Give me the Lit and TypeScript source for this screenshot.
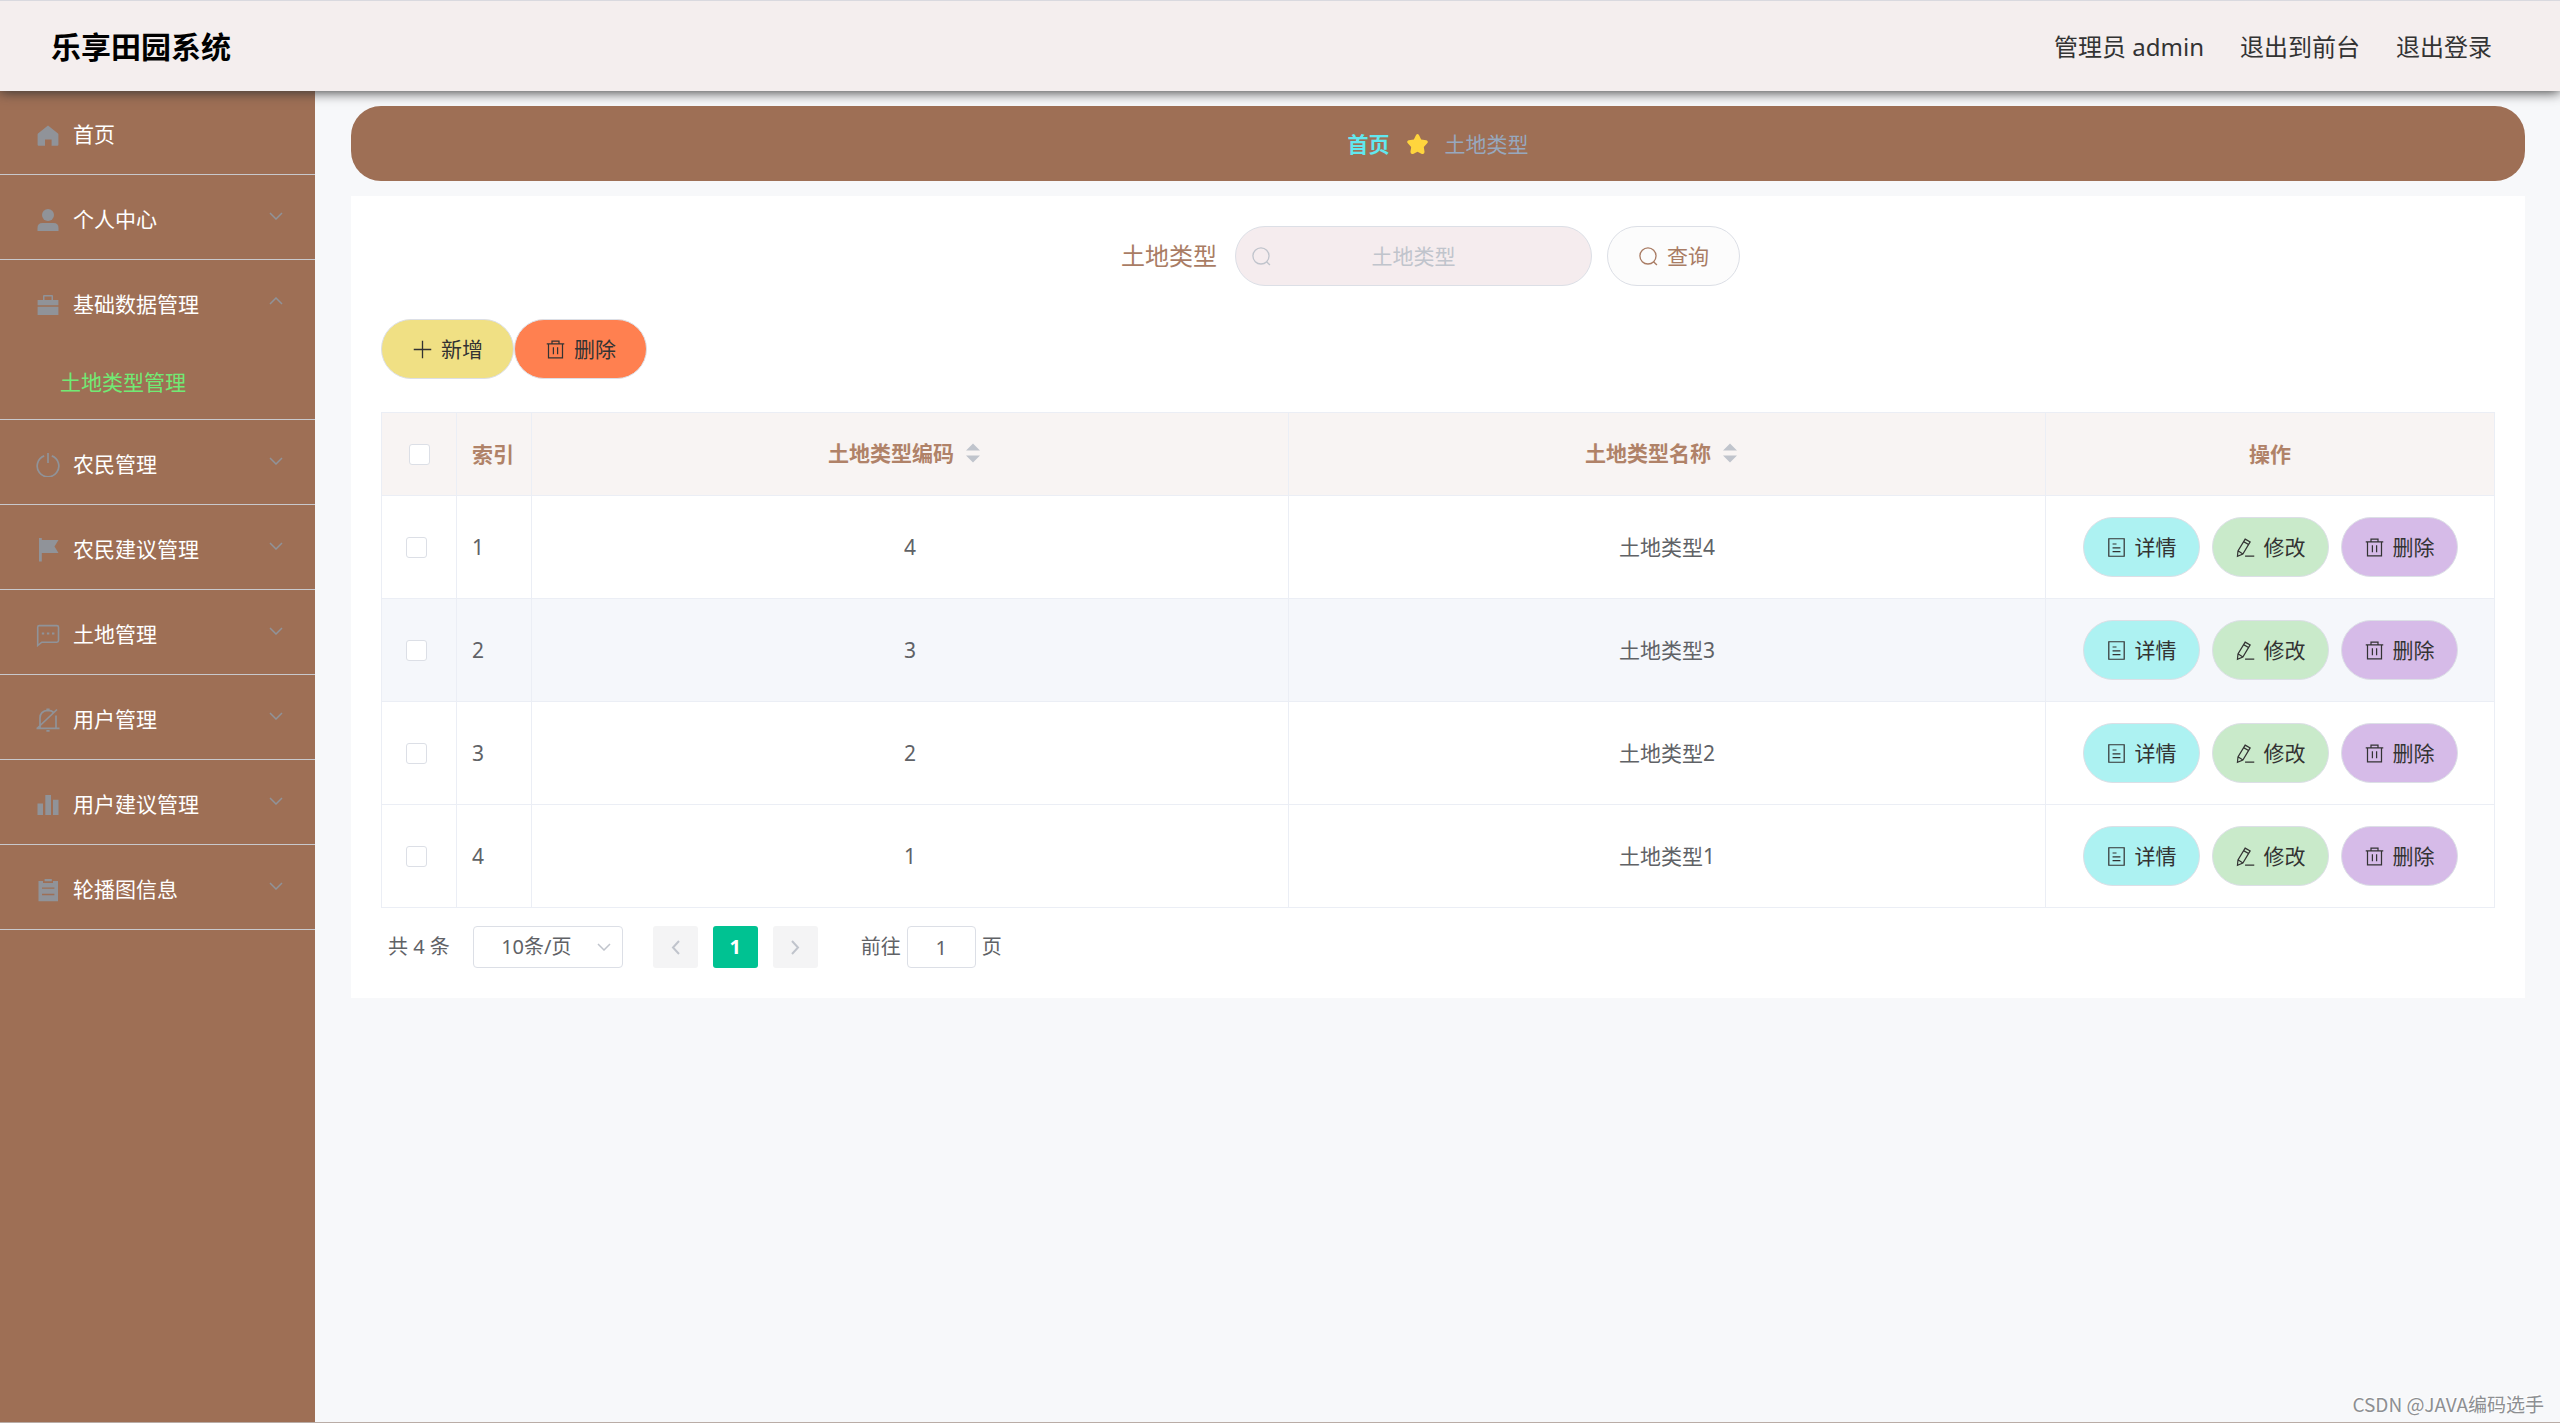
import { LitElement, html, css, svg, nothing } from "lit";
import { customElement, state } from "lit/decorators.js";
import { classMap } from "lit/directives/class-map.js";

const solid = {
  home: svg`<path d="M12 2.5 22 10.5Q22.4 10.8 22.4 11.5V21.8Q22.4 22.8 21.4 22.8H15.6V16.6H9V22.8H2.7Q1.6 22.8 1.6 21.8V11.5Q1.6 10.8 2 10.5Z"/>`,
  user: svg`<circle cx="12" cy="7" r="6"/><path d="M1.5 23V20Q1.5 15 6.5 15H17.5Q22.5 15 22.5 20V23Z"/>`,
  briefcase: svg`<path d="M7 7V3Q7 2 8 2H16Q17 2 17 3V7H22.4V12.2H1.6V7ZM8.5 7H15.5V3.4H8.5ZM1.6 13.8H22.4V22H1.6Z" fill-rule="evenodd"/>`,
  flag: svg`<path d="M3 0H5.8V2H22.5L18.5 8.5 22.5 15H5.8V23.5H3Z"/>`,
  bars: svg`<path d="M1.5 10.5H7V22H1.5ZM9.3 2H15V22H9.3ZM17 6.8H22.5V22H17Z"/>`,
  clipboard: svg`<path d="M2.5 3H7V5H17V3H22V23.2H2.5ZM8.6 1H15.8V3.2H8.6ZM6 9.4V10.8H18.4V9.4ZM6 15.8V17.2H18.4V15.8Z" fill-rule="evenodd"/>`,
};
const line = {
  power: svg`<path d="M8.2 2.9A10.8 10.8 0 1 0 15.8 2.9M12 0V10" stroke-width="1.7"/>`,
  chat: svg`<path d="M1.7 22.5V4.2Q1.7 2.6 3.3 2.6H20.9Q22.5 2.6 22.5 4.2V17.6Q22.5 19.2 20.9 19.2H5.8Z" stroke-width="1.6"/><path d="M5.8 10.6H8.2M10.9 10.6H13.3M16 10.6H18.4" stroke-width="2"/>`,
  bell: svg`<path d="M.5 20.4H23.5M4 19.5V10Q4 2.8 12 2.3 15.5 2.3 17.6 4.4M20 7.6V20.2M21 1.5 1 20.5" stroke-width="1.7"/><path d="M10.4 1.4H13.6M10.4 22.8H13.6" stroke-width="1.8"/>`,
  plus: svg`<path d="M12 2V22M2 12H22" stroke-width="1.5"/>`,
  trash: svg`<path d="M2 5.5H22M8 5V2.4H16V5M4 5.5V21.6H20V5.5M9.6 9.5V17.5M14.4 9.5V17.5" stroke-width="1.4"/>`,
  doc: svg`<path d="M3.2 2H20.8V22H3.2ZM7.5 8H12M7.5 12.4H16.5M7.5 16.8H16.5" stroke-width="1.4"/>`,
  pen: svg`<path d="M11.6 2.4 17.3 5.6 9 19.4 2.8 22 3.4 15.8ZM9.8 5.3 15.5 8.6M3.4 15.8 9 19.4M11.5 21.8H22" stroke-width="1.4"/>`,
  search: svg`<circle cx="11.4" cy="11.4" r="9.2" stroke-width="1.5"/><path d="M17.8 18 21.6 21.8" stroke-width="1.5"/>`,
};
type Solid = keyof typeof solid;
type Line = keyof typeof line;

const icon = (name: Solid | Line) =>
  name in solid
    ? html`<svg class="icon" viewBox="0 0 24 24" fill="currentColor" aria-hidden="true">${solid[name as Solid]}</svg>`
    : html`<svg class="icon" viewBox="0 0 24 24" fill="none" stroke="currentColor" aria-hidden="true">${line[name as Line]}</svg>`;

const chevron = (cls: string, d = "M1 1 7 7 13 1") =>
  html`<svg class=${cls} viewBox="0 0 14 8" fill="none" stroke="currentColor" stroke-width="1.5" aria-hidden="true"><path d=${d} /></svg>`;

interface MenuItem {
  label: string;
  icon: Solid | Line;
  leaf?: boolean;
  children?: string[];
}

const menu: MenuItem[] = [
  { label: "首页", icon: "home", leaf: true },
  { label: "个人中心", icon: "user" },
  { label: "基础数据管理", icon: "briefcase", children: ["土地类型管理"] },
  { label: "农民管理", icon: "power" },
  { label: "农民建议管理", icon: "flag" },
  { label: "土地管理", icon: "chat" },
  { label: "用户管理", icon: "bell" },
  { label: "用户建议管理", icon: "bars" },
  { label: "轮播图信息", icon: "clipboard" },
];

const rows = [4, 3, 2, 1].map((code, i) => ({ index: i + 1, code, name: `土地类型${code}` }));

@customElement("app-root")
export class AppRoot extends LitElement {
  @state() private opened = "基础数据管理";
  @state() private active = 2;

  static styles = css`
    :host {
      display: flex;
      flex-direction: column;
      box-sizing: border-box;
      min-height: 100vh;
      border-bottom: 1px solid #b9aca6;
      background: #f7f8fa;
      color: #606266;
      font-family: "Noto Sans", "Noto Sans CJK SC", sans-serif;
      font-size: 21px;
      line-height: 30px;
    }
    * { box-sizing: border-box; }
    a { color: inherit; text-decoration: none; }
    button, input, select { margin: 0; font: inherit; color: inherit; }
    button { cursor: pointer; }
    .icon { flex: none; width: 21px; height: 21px; }

    .top {
      position: relative;
      z-index: 1;
      display: flex;
      align-items: center;
      justify-content: space-between;
      height: 91px;
      margin-bottom: -1px;
      padding: 2px 68px 0 51px;
      border-top: 1px solid #d9d9df;
      background: #f4eeee;
      box-shadow: 0 1px 12px #333;
    }
    .title { margin: 0; color: #000; font-size: 30px; font-weight: 700; }
    .links { display: flex; gap: 36px; color: #333; font-size: 24px; }

    .body { position: relative; flex: 1; display: flex; }
    .side { flex: none; width: 315px; background: #9e6f55; }
    .group { border-bottom: 1px solid #c8c8cc; }
    .item {
      display: flex;
      align-items: center;
      gap: 13px;
      width: 100%;
      height: 84px;
      padding: 4px 32px 0 36px;
      border: 0;
      background: none;
      color: #fff;
      text-align: left;
    }
    .item .icon { width: 24px; height: 24px; margin-top: 2px; color: #909399; }
    .item .label { flex: 1; }
    .arrow { width: 14px; height: 8px; margin-bottom: 6px; color: #909399; }
    .arrow.open { transform: rotate(180deg); }
    .sub { display: flex; align-items: center; height: 75px; padding-left: 60px; color: #71ea74; }

    .main {
      flex: 1;
      min-width: 0;
      display: flex;
      flex-direction: column;
      gap: 15px;
      padding: 16px 35px 15px 36px;
    }
    .crumbs {
      display: flex;
      align-items: center;
      justify-content: center;
      gap: 16px;
      height: 75px;
      border-radius: 30px;
      background: #9e6f55;
      color: #97a8be;
    }
    .crumbs a { color: #61e8ef; font-weight: 700; }
    .star { width: 23px; height: 22px; fill: #ffd53d; }

    .card { display: flex; flex-direction: column; gap: 33px; padding: 30px; background: #fff; }
    .search { display: flex; align-items: center; justify-content: center; gap: 15px; padding-right: 15px; color: #a97c64; }
    .field { display: flex; align-items: center; gap: 18px; font-size: 24px; }
    .box {
      display: flex;
      align-items: center;
      width: 357px;
      height: 60px;
      padding: 0 15px;
      border: 1px solid #dcdfe6;
      border-radius: 30px;
      background: #f5ecee;
      color: #c0c4cc;
      font-size: 21px;
    }
    .box input {
      flex: 1;
      min-width: 0;
      padding: 0 21px 0 0;
      border: 0;
      outline: 0;
      background: none;
      color: #606266;
      text-align: center;
    }
    .box input::placeholder { color: #c0c4cc; opacity: 1; }

    .btn {
      display: flex;
      align-items: center;
      gap: 8px;
      height: 60px;
      padding: 0 30px;
      border: 1px solid #dcdfe6;
      border-radius: 30px;
      color: #333;
      white-space: nowrap;
    }
    .query { background: #fcfcfc; color: #a97c64; }
    .add { background: #f0e084; }
    .remove { background: #ff8050; }
    .small { padding: 0 22px; }
    .detail { background: #adf2f2; }
    .edit { background: #c9eaca; }
    .drop { background: #d6bbe8; }
    .tools { display: flex; }
    .actions { display: flex; justify-content: center; gap: 12px; }

    .table { width: 100%; border-collapse: collapse; table-layout: fixed; }
    th, td { padding: 0 15px; border: 1px solid #ebeef5; text-align: center; }
    th { height: 83px; background: #f8f4f3; color: #b08268; font-weight: 700; }
    td { height: 103px; }
    .hover { background: #f5f7fb; }
    .c-check { width: 75px; }
    .c-index { width: 75px; }
    .c-ops { width: 449px; }
    .index { text-align: left; white-space: nowrap; }
    th.check { padding: 0 0 0 27px; }
    td.check { padding: 0 0 0 24px; }
    .check input {
      display: block;
      appearance: none;
      width: 21px;
      height: 21px;
      border: 1px solid #dcdfe6;
      border-radius: 3px;
      background: #fff;
    }
    .check input:checked { background: #00c292; }
    .sortable {
      display: inline-flex;
      align-items: center;
      gap: 12px;
      padding: 0 12px 3px 0;
      border: 0;
      background: none;
      font-weight: 700;
    }
    .sort { width: 14px; height: 20px; fill: #c0c4cc; }

    .listing { display: flex; flex-direction: column; gap: 18px; }
    .pager { display: flex; align-items: center; height: 42px; padding-left: 7px; gap: 15px; font-size: 20px; }
    .size { display: grid; align-items: center; width: 150px; margin: 0 15px 0 8px; }
    .size select {
      grid-area: 1 / 1;
      width: 100%;
      height: 42px;
      padding: 0 38px 0 15px;
      appearance: none;
      border: 1px solid #dcdfe6;
      border-radius: 4px;
      background: #fff;
      text-align: center;
      text-align-last: center;
    }
    .caret { grid-area: 1 / 1; justify-self: end; width: 14px; height: 8px; margin-right: 12px; color: #c0c4cc; pointer-events: none; }
    .page {
      display: flex;
      align-items: center;
      justify-content: center;
      width: 45px;
      height: 42px;
      padding: 0;
      border: 0;
      border-radius: 3px;
      background: #f4f4f5;
      color: #c0c4cc;
    }
    .page.current { background: #00c292; color: #fff; font-weight: 700; }
    .step { width: 9px; height: 15px; }
    .jump { display: flex; align-items: center; gap: 6px; margin-left: 28px; }
    .jump input {
      width: 69px;
      height: 42px;
      padding: 0;
      border: 1px solid #dcdfe6;
      border-radius: 4px;
      background: #fff;
      text-align: center;
    }
    .mark {
      position: absolute;
      right: 16px;
      bottom: 3px;
      color: #8d8f92;
      font-family: "Noto Sans CJK SC", sans-serif;
      font-size: 19px;
      text-shadow: -1px -1px 0 #fff;
    }
  `;

  private renderGroup(item: MenuItem) {
    const open = this.opened === item.label;
    if (item.leaf)
      return html`<div class="group"><a class="item" href="#home">${icon(item.icon)}<span class="label">${item.label}</span></a></div>`;
    return html`<div class="group">
      <button class="item" aria-expanded=${open} @click=${() => (this.opened = open ? "" : item.label)}>
        ${icon(item.icon)}<span class="label">${item.label}</span>${chevron(open ? "arrow open" : "arrow")}
      </button>
      ${open ? item.children?.map((c) => html`<a class="sub" href="#type">${c}</a>`) : nothing}
    </div>`;
  }

  private button(cls: string, name: Line, label: string, small = false) {
    return html`<button class=${classMap({ btn: true, small, [cls]: true })}>${icon(name)}<span>${label}</span></button>`;
  }

  private sortHead(label: string) {
    return html`<th scope="col">
      <button class="sortable">${label}<svg class="sort" viewBox="0 0 14 20" aria-hidden="true"><path d="M0 7.5 7 .5 14 7.5ZM0 12.5H14L7 19.5Z" /></svg></button>
    </th>`;
  }

  render() {
    return html`
      <header class="top">
        <h1 class="title">乐享田园系统</h1>
        <nav class="links">
          <span>管理员 admin</span>
          <a href="#front">退出到前台</a>
          <a href="#logout">退出登录</a>
        </nav>
      </header>
      <div class="body">
        <nav class="side">${menu.map((m) => this.renderGroup(m))}</nav>
        <main class="main">
          <nav class="crumbs">
            <a href="#home">首页</a>
            <svg class="star" viewBox="0 0 24 24" aria-hidden="true">
              <path d="M10.4 2.2Q12 .2 13.6 2.2L16 7 21.6 7.9Q24.2 8.8 22.8 11L18.9 15.2 19.7 20.8Q19.4 23.6 16.8 22.8L12 20.4 7.2 22.8Q4.6 23.6 4.3 20.8L5.1 15.2 1.2 11Q-.2 8.8 2.4 7.9L8 7Z" />
            </svg>
            <span>土地类型</span>
          </nav>
          <section class="card">
            <form class="search" @submit=${(e: Event) => e.preventDefault()}>
              <div class="field">
                <label for="type">土地类型</label>
                <div class="box">${icon("search")}<input id="type" type="text" placeholder="土地类型" /></div>
              </div>
              ${this.button("query", "search", "查询")}
            </form>
            <div class="tools">${this.button("add", "plus", "新增")}${this.button("remove", "trash", "删除")}</div>
            <div class="listing">
              <table class="table">
                <colgroup>
                  <col class="c-check" /><col class="c-index" /><col /><col /><col class="c-ops" />
                </colgroup>
                <thead>
                  <tr>
                    <th class="check"><input type="checkbox" aria-label="全选" /></th>
                    <th class="index" scope="col">索引</th>
                    ${this.sortHead("土地类型编码")}${this.sortHead("土地类型名称")}
                    <th scope="col">操作</th>
                  </tr>
                </thead>
                <tbody>
                  ${rows.map(
                    (r) => html`<tr class=${classMap({ hover: r.index === this.active })} @mouseenter=${() => (this.active = r.index)}>
                      <td class="check"><input type="checkbox" aria-label=${r.name} /></td>
                      <td class="index">${r.index}</td>
                      <td>${r.code}</td>
                      <td>${r.name}</td>
                      <td>
                        <div class="actions">
                          ${this.button("detail", "doc", "详情", true)}
                          ${this.button("edit", "pen", "修改", true)}
                          ${this.button("drop", "trash", "删除", true)}
                        </div>
                      </td>
                    </tr>`
                  )}
                </tbody>
              </table>
              <div class="pager">
                <span>共 4 条</span>
                <div class="size">
                  <select aria-label="每页条数"><option>10条/页</option><option>20条/页</option></select>
                  ${chevron("caret")}
                </div>
                <button class="page" aria-label="上一页" disabled>
                  <svg class="step" viewBox="0 0 9 15" fill="none" stroke="currentColor" stroke-width="2"><path d="M8 1 2 7.5 8 14" /></svg>
                </button>
                <button class="page current">1</button>
                <button class="page" aria-label="下一页" disabled>
                  <svg class="step" viewBox="0 0 9 15" fill="none" stroke="currentColor" stroke-width="2"><path d="M1 1 7 7.5 1 14" /></svg>
                </button>
                <label class="jump">前往<input type="text" value="1" />页</label>
              </div>
            </div>
          </section>
        </main>
        <div class="mark">CSDN @JAVA编码选手</div>
      </div>
    `;
  }
}
